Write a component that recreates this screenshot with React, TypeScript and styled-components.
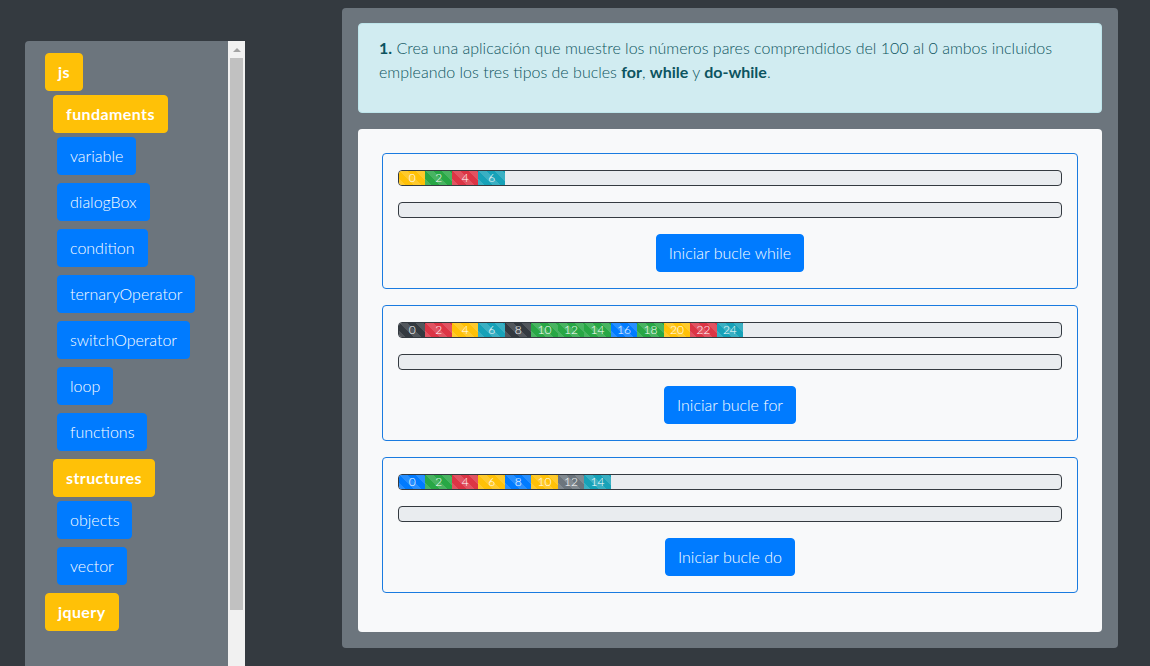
import React from "react";
import styled, { createGlobalStyle } from "styled-components";

const Global = createGlobalStyle`
  html, body { margin: 0; padding: 0; overflow: hidden; }
  body {
    background: #343a40;
    font-family: Lato, "Open Sans", sans-serif;
    font-weight: 300;
    font-size: 16px;
    line-height: 1.5;
  }
  * { box-sizing: border-box; }
`;

const Page = styled.div`
  display: flex;
  align-items: flex-start;
  padding-left: 25px;
  height: 666px;
`;

const Sidebar = styled.aside`
  margin-top: 41px;
  width: 220px;
  height: 625px;
  display: flex;
  background: #6c757d;
  border-top-left-radius: 4px;
  overflow: hidden;
`;

const Tree = styled.div`
  flex: 1;
  padding: 12px 0 0 20px;
  display: flex;
  flex-direction: column;
  align-items: flex-start;
`;

const Track = styled.div`
  width: 17px;
  background: #f1f1f1;
  display: flex;
  flex-direction: column;
  align-items: center;
`;

const Arrow = styled.div`
  height: 17px;
  display: flex;
  align-items: center;
  justify-content: center;
  &::before {
    content: "";
    border-left: 4px solid transparent;
    border-right: 4px solid transparent;
    border-bottom: 4px solid #a3a3a3;
  }
`;

const Thumb = styled.div`
  width: 13px;
  height: 552px;
  background: #c1c1c1;
`;

const NodeBtn = styled.div<{ $kind: "folder" | "file"; $indent: number }>`
  display: inline-block;
  height: 38px;
  padding: 6px 12px;
  border: 1px solid ${(p) => (p.$kind === "folder" ? "#ffc107" : "#007bff")};
  background: ${(p) => (p.$kind === "folder" ? "#ffc107" : "#007bff")};
  color: #fff;
  border-radius: 4px;
  font-weight: ${(p) => (p.$kind === "folder" ? 700 : 300)};
  letter-spacing: ${(p) => (p.$kind === "folder" ? "0.4px" : "0")};
  line-height: 24px;
  margin-left: ${(p) => p.$indent}px;
  margin-bottom: ${(p) => (p.$kind === "folder" ? 4 : 8)}px;
  white-space: nowrap;
`;

const Main = styled.main`
  margin-left: 97px;
  margin-top: 8px;
  width: 776px;
  height: 640px;
  background: #6c757d;
  border-radius: 4px;
  padding: 15px 16px 16px;
  display: flex;
  flex-direction: column;
`;

const Alert = styled.div`
  background: #d1ecf1;
  border: 1px solid #bee5eb;
  color: #0c5460;
  border-radius: 4px;
  padding: 12px 20px;
  margin-bottom: 16px;
  p { margin: 0 0 16px; }
  b { font-weight: 700; }
`;

const Card = styled.div`
  flex: 1;
  background: #f8f9fa;
  border-radius: 4px;
  padding: 24px 24px 0;
  display: flex;
  flex-direction: column;
  gap: 16px;
`;

const LoopBox = styled.div`
  border: 1px solid #1a7be0;
  border-radius: 4px;
  padding: 16px 15px;
  display: flex;
  flex-direction: column;
  gap: 16px;
`;

const Progress = styled.div`
  height: 16px;
  border: 1px solid #343a40;
  border-radius: 4px;
  background: #e9ecef;
  display: flex;
  overflow: hidden;
`;

const colors: Record<string, string> = {
  primary: "#007bff",
  success: "#28a745",
  danger: "#dc3545",
  warning: "#ffc107",
  info: "#17a2b8",
  dark: "#343a40",
  secondary: "#6c757d",
};

const Segment = styled.div<{ $color: string }>`
  width: 4%;
  background-color: ${(p) => colors[p.$color]};
  background-image: linear-gradient(
    45deg,
    rgba(255, 255, 255, 0.15) 25%,
    transparent 25%,
    transparent 50%,
    rgba(255, 255, 255, 0.15) 50%,
    rgba(255, 255, 255, 0.15) 75%,
    transparent 75%,
    transparent
  );
  background-size: 16px 16px;
  color: #fff;
  font-size: 12px;
  line-height: 14px;
  text-align: center;
`;

const Actions = styled.div`
  display: flex;
  justify-content: center;
`;

const Button = styled.button`
  font-family: inherit;
  font-weight: 300;
  font-size: 16px;
  line-height: 24px;
  height: 38px;
  padding: 6px 12px;
  background: #007bff;
  color: #fff;
  border: 1px solid #007bff;
  border-radius: 4px;
`;

const tree: { label: string; kind: "folder" | "file"; indent: number }[] = [
  { label: "js", kind: "folder", indent: 0 },
  { label: "fundaments", kind: "folder", indent: 8 },
  { label: "variable", kind: "file", indent: 12 },
  { label: "dialogBox", kind: "file", indent: 12 },
  { label: "condition", kind: "file", indent: 12 },
  { label: "ternaryOperator", kind: "file", indent: 12 },
  { label: "switchOperator", kind: "file", indent: 12 },
  { label: "loop", kind: "file", indent: 12 },
  { label: "functions", kind: "file", indent: 12 },
  { label: "structures", kind: "folder", indent: 8 },
  { label: "objects", kind: "file", indent: 12 },
  { label: "vector", kind: "file", indent: 12 },
  { label: "jquery", kind: "folder", indent: 0 },
];

const loops = [
  { name: "while", bar: ["warning", "success", "danger", "info"] },
  {
    name: "for",
    bar: [
      "dark", "danger", "warning", "info", "dark", "success", "success",
      "success", "primary", "success", "warning", "danger", "info",
    ],
  },
  {
    name: "do",
    bar: ["primary", "success", "danger", "warning", "primary", "warning", "secondary", "info"],
  },
];

export default function App() {
  return (
    <>
      <Global />
      <Page>
        <Sidebar>
          <Tree>
            {tree.map((n) => (
              <NodeBtn key={n.label} $kind={n.kind} $indent={n.indent}>
                {n.label}
              </NodeBtn>
            ))}
          </Tree>
          <Track>
            <Arrow />
            <Thumb />
          </Track>
        </Sidebar>
        <Main>
          <Alert>
            <p>
              <b>1.</b> Crea una aplicación que muestre los números pares comprendidos del 100 al 0
              ambos incluidos empleando los tres tipos de bucles <b>for</b>, <b>while</b> y{" "}
              <b>do-while</b>.
            </p>
          </Alert>
          <Card>
            {loops.map((l) => (
              <LoopBox key={l.name}>
                <Progress>
                  {l.bar.map((c, i) => (
                    <Segment key={i} $color={c}>
                      {i * 2}
                    </Segment>
                  ))}
                </Progress>
                <Progress />
                <Actions>
                  <Button>Iniciar bucle {l.name}</Button>
                </Actions>
              </LoopBox>
            ))}
          </Card>
        </Main>
      </Page>
    </>
  );
}
